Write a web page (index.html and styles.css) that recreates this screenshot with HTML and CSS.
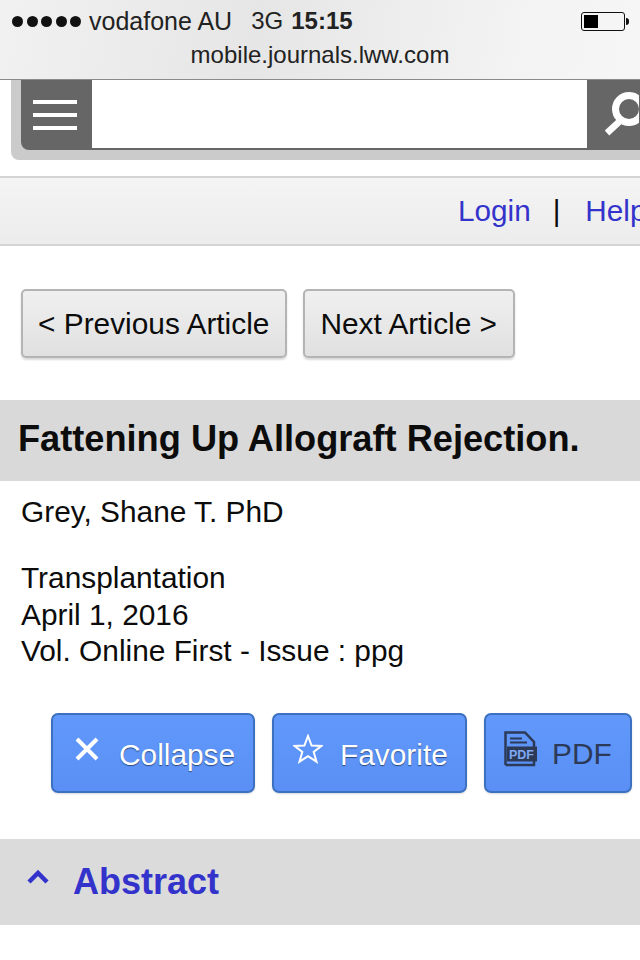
FILE: index.html
```html
<!DOCTYPE html>
<html lang="en">
<head>
    <meta charset="UTF-8">
    <meta name="viewport" content="width=device-width, initial-scale=1.0">
    <title>Fattening Up Allograft Rejection.</title>
    <link rel="stylesheet" href="styles.css">
</head>
<body>
    <header class="browser-bar">
        <div class="status-row">
            <div class="signal"><span></span><span></span><span></span><span></span><span></span></div>
            <span class="carrier">vodafone AU</span>
            <span class="network">3G</span>
            <span class="clock">15:15</span>
            <div class="battery"><div class="battery-body"><div class="battery-level"></div></div><div class="battery-tip"></div></div>
        </div>
        <div class="url">mobile.journals.lww.com</div>
    </header>

    <div class="search-wrap">
        <div class="search-box">
            <div class="menu-btn"><span></span><span></span><span></span></div>
            <div class="search-input"></div>
            <div class="search-btn">
                <svg width="52" height="50" viewBox="0 0 52 50">
                    <circle cx="42" cy="19" r="13.5" fill="none" stroke="#fff" stroke-width="7"/>
                    <path d="M33 31 L20 43" fill="none" stroke="#fff" stroke-width="6.5"/>
                </svg>
            </div>
        </div>
    </div>

    <nav class="user-nav">
        <a class="nav-link">Login</a>
        <span class="nav-sep">|</span>
        <a class="nav-link">Help</a>
    </nav>

    <div class="pager">
        <a class="pager-btn">&lt; Previous Article</a>
        <a class="pager-btn">Next Article &gt;</a>
    </div>

    <h1 class="article-title">Fattening Up Allograft Rejection.</h1>

    <p class="authors">Grey, Shane T. PhD</p>
    <p class="citation">Transplantation<br>April 1, 2016<br>Vol. Online First - Issue : ppg</p>

    <div class="actions">
        <a class="action-btn btn-collapse">
            <svg width="28" height="28" viewBox="0 0 28 28">
                <path d="M4 4 L24 24 M24 4 L4 24" fill="none" stroke="#fff" stroke-width="4"/>
            </svg>
            <span>Collapse</span>
        </a>
        <a class="action-btn btn-favorite">
            <svg width="30" height="30" viewBox="0 0 30 30">
                <path d="M15 2 L18.6 11.6 L28.6 11.9 L20.7 18 L23.5 27.7 L15 22.1 L6.5 27.7 L9.3 18 L1.4 11.9 L11.4 11.6 Z" fill="none" stroke="#fff" stroke-width="2"/>
            </svg>
            <span>Favorite</span>
        </a>
        <a class="action-btn btn-pdf">
            <svg width="33" height="36" viewBox="0 0 33 36">
                <path d="M1.5 34 V1.5 H21 L30 11 V16 M1.5 34 H30 V30" fill="none" stroke="#2c3a58" stroke-width="2.5"/>
                <path d="M6 7.5 H18 M6 11.5 H23" fill="none" stroke="#2c3a58" stroke-width="2"/>
                <rect x="3" y="15.5" width="30" height="15" fill="#2c3a58"/>
                <text x="5" y="27.5" class="pdf-mark">PDF</text>
            </svg>
            <span>PDF</span>
        </a>
    </div>

    <section class="abstract-head">
        <svg width="22" height="14" viewBox="0 0 22 14">
            <path d="M2 12 L11 3 L20 12" fill="none" stroke="#3333cc" stroke-width="4.5"/>
        </svg>
        <h2>Abstract</h2>
    </section>
</body>
</html>
```

FILE: styles.css
```css
html, body {
    margin: 0;
    padding: 0;
}
body {
    width: 640px;
    height: 960px;
    overflow: hidden;
    background-color: #fff;
    color: #0c0c0c;
    font-family: "Liberation Sans", Arial, sans-serif;
}

/* browser chrome */
.browser-bar {
    height: 79px;
    box-sizing: content-box;
    border-bottom: 1px solid #8a8a8a;
    background: linear-gradient(100deg, #f1f1f1, #e6e6e6 40%, #f3f3f3 80%, #f6f6f6);
    color: #222;
}
.status-row {
    display: flex;
    align-items: center;
    height: 42px;
    padding-left: 12px;
    font-size: 25px;
}
.signal {
    display: flex;
    gap: 3.5px;
    margin-right: 8px;
}
.signal span {
    width: 11px;
    height: 11px;
    border-radius: 50%;
    background-color: #111;
}
.network {
    margin-left: 19px;
    font-size: 24px;
}
.clock {
    margin-left: 8px;
    font-size: 24px;
    font-weight: bold;
}
.battery {
    display: flex;
    align-items: center;
    margin-left: auto;
    margin-right: 11px;
}
.battery-body {
    box-sizing: border-box;
    width: 44px;
    height: 19px;
    padding: 2px;
    border: 1px solid #111;
    border-radius: 3px;
}
.battery-level {
    width: 14px;
    height: 100%;
    background-color: #000;
}
.battery-tip {
    width: 3px;
    height: 7px;
    margin-left: 1px;
    border-radius: 0 3px 3px 0;
    background-color: #111;
}
.url {
    text-align: center;
    font-size: 24px;
    line-height: 26px;
}

/* search */
.search-wrap {
    height: 80px;
    margin-left: 11px;
    padding-left: 10px;
    background-color: #cbcbcb;
    border-radius: 0 0 0 8px;
}
.search-box {
    display: flex;
    height: 70px;
    background-color: #666;
    border-radius: 0 0 0 8px;
}
.menu-btn {
    box-sizing: border-box;
    display: flex;
    flex-direction: column;
    justify-content: center;
    align-items: center;
    gap: 9px;
    width: 71px;
    padding-right: 3px;
    flex-shrink: 0;
}
.menu-btn span {
    width: 44px;
    height: 4px;
    background-color: #fff;
}
.search-input {
    width: 495px;
    height: 68px;
    flex-shrink: 0;
    background-color: #fff;
}
.search-btn {
    flex: 1;
    overflow: hidden;
}
.search-btn svg {
    display: block;
    margin-top: 10px;
}

/* login strip */
.user-nav {
    display: flex;
    align-items: center;
    height: 66px;
    margin-top: 16px;
    padding-left: 458px;
    border-top: 2px solid #d4d4d4;
    border-bottom: 2px solid #d4d4d4;
    background: linear-gradient(#f4f4f4, #ececec);
    font-size: 29.7px;
    white-space: nowrap;
}
.nav-link {
    color: #3333cc;
}
.nav-sep {
    margin: 0 25px 0 22px;
}

/* prev / next */
.pager {
    display: flex;
    gap: 16px;
    padding: 43px 0 0 21px;
}
.pager-btn {
    box-sizing: border-box;
    height: 69px;
    padding: 0 16px 0 15px;
    line-height: 65px;
    font-size: 29.85px;
    border: 2px solid #b4b4b4;
    border-radius: 5px;
    background: linear-gradient(#f0f0f0, #e0e0e0);
    box-shadow: 0 2px 2px rgba(0,0,0,0.15);
}

/* article info */
.article-title {
    margin: 42px 0 0;
    height: 81px;
    padding-left: 18px;
    background-color: #d9d9d9;
    font-size: 36.2px;
    line-height: 77px;
    color: #0c0c0c;
}
.authors {
    margin: 13px 0 0 21px;
    font-size: 29.85px;
    line-height: 36px;
}
.citation {
    margin: 30px 0 0 21px;
    font-size: 29.85px;
    line-height: 36.5px;
}

/* action buttons */
.actions {
    display: flex;
    margin: 43px 0 0 51px;
}
.action-btn {
    box-sizing: border-box;
    display: flex;
    align-items: center;
    height: 80px;
    border: 2px solid #3c70c0;
    border-radius: 7px;
    background: linear-gradient(#6198fa, #5a90f5);
    color: #fff;
    font-size: 29.85px;
    text-shadow: 0 1px 1px #2c4a80;
    box-shadow: 0 1px 2px rgba(0,0,0,0.15);
}
.btn-collapse {
    width: 204px;
    margin-right: 17px;
    padding-left: 20px;
    gap: 18px;
}
.btn-favorite {
    width: 195px;
    margin-right: 17px;
    padding-left: 19px;
    gap: 17px;
}
.btn-pdf {
    width: 148px;
    padding-left: 18px;
    gap: 15px;
    color: #2c3a58;
    text-shadow: none;
}
.action-btn svg {
    flex-shrink: 0;
    margin-top: -8px;
}
.action-btn span {
    margin-top: 4px;
}
.btn-pdf span {
    margin-top: 2px;
}
.pdf-mark {
    font-family: "Liberation Sans", sans-serif;
    font-size: 12.5px;
    font-weight: bold;
    fill: #7fa9f5;
}

/* abstract */
.abstract-head {
    display: flex;
    align-items: center;
    gap: 24px;
    height: 86px;
    margin-top: 46px;
    padding-left: 27px;
    background-color: #dbdbdb;
}
.abstract-head svg {
    margin-top: -9px;
}
.abstract-head h2 {
    margin: 0;
    font-size: 36px;
    color: #3333cc;
}
```
